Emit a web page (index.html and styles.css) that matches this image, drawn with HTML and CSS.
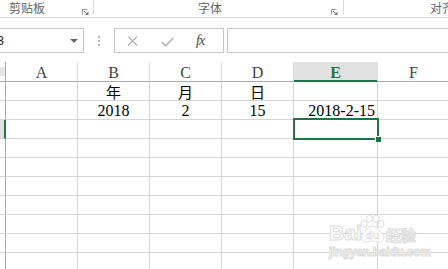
FILE: index.html
```html
<!DOCTYPE html>
<html lang="zh-CN">
<head>
  <meta charset="UTF-8" />
  <meta name="viewport" content="width=device-width, initial-scale=1.0"/>
  <title>Excel - 日期</title>
  <link rel="stylesheet" href="styles.css">
</head>

<body>
  <div class="ribbon">
    <div class="group group-clip">
      <span class="group-label">剪贴板</span>
      <svg class="launcher" width="7" height="6" viewBox="0 0 7 6">
        <path d="M0.5 5.5V0.5H5.5" fill="none" stroke="#9a9a9a" stroke-width="1"/>
        <path d="M2 2L5 5" stroke="#7a7a7a" stroke-width="1"/>
        <path d="M6.5 2.5V6.5H2.5Z" fill="#7a7a7a"/>
      </svg>
    </div>
    <div class="group group-font">
      <span class="group-label">字体</span>
      <svg class="launcher" width="7" height="6" viewBox="0 0 7 6">
        <path d="M0.5 5.5V0.5H5.5" fill="none" stroke="#9a9a9a" stroke-width="1"/>
        <path d="M2 2L5 5" stroke="#7a7a7a" stroke-width="1"/>
        <path d="M6.5 2.5V6.5H2.5Z" fill="#7a7a7a"/>
      </svg>
    </div>
    <div class="group group-align">
      <span class="group-label">对齐方式</span>
    </div>
  </div>

  <div class="formula-bar">
    <div class="name-box">
      <span class="name">E3</span>
      <svg class="caret" width="8" height="4" viewBox="0 0 8 4"><path d="M0 0H8L4 4Z" fill="#6a6a6a"/></svg>
    </div>
    <div class="grip"><i></i><i></i><i></i></div>
    <div class="fx-buttons">
      <svg class="btn-cancel" width="11" height="10" viewBox="0 0 11 10">
        <path d="M1 0.5L10 9.5M10 0.5L1 9.5" stroke="#b4b4b4" stroke-width="1.2"/>
      </svg>
      <svg class="btn-enter" width="13" height="10" viewBox="0 0 13 10">
        <path d="M0.8 5.2L4.6 8.8L12.4 0.8" fill="none" stroke="#b9b9b9" stroke-width="1.8"/>
      </svg>
      <span class="btn-fx">fx</span>
    </div>
    <div class="formula-input"></div>
  </div>

  <div class="sheet">
    <div class="corner"></div>
    <div class="col-head">A</div>
    <div class="col-head">B</div>
    <div class="col-head">C</div>
    <div class="col-head">D</div>
    <div class="col-head active">E</div>
    <div class="col-head">F</div>

    <div class="row-head"></div>
    <div class="cell"></div>
    <div class="cell cjk">年</div>
    <div class="cell cjk">月</div>
    <div class="cell cjk">日</div>
    <div class="cell"></div>
    <div class="cell"></div>

    <div class="row-head"></div>
    <div class="cell"></div>
    <div class="cell">2018</div>
    <div class="cell">2</div>
    <div class="cell">15</div>
    <div class="cell date">2018-2-15</div>
    <div class="cell"></div>

    <div class="row-head active"></div>
    <div class="cell"></div>
    <div class="cell"></div>
    <div class="cell"></div>
    <div class="cell"></div>
    <div class="cell selected"><div class="selection"><span class="fill-handle"></span></div></div>
    <div class="cell"></div>

    <div class="row-head"></div><div class="cell"></div><div class="cell"></div><div class="cell"></div><div class="cell"></div><div class="cell"></div><div class="cell"></div>
    <div class="row-head"></div><div class="cell"></div><div class="cell"></div><div class="cell"></div><div class="cell"></div><div class="cell"></div><div class="cell"></div>
    <div class="row-head"></div><div class="cell"></div><div class="cell"></div><div class="cell"></div><div class="cell"></div><div class="cell"></div><div class="cell"></div>
    <div class="row-head"></div><div class="cell"></div><div class="cell"></div><div class="cell"></div><div class="cell"></div><div class="cell"></div><div class="cell"></div>
    <div class="row-head"></div><div class="cell"></div><div class="cell"></div><div class="cell"></div><div class="cell"></div><div class="cell"></div><div class="cell"></div>
    <div class="row-head"></div><div class="cell"></div><div class="cell"></div><div class="cell"></div><div class="cell"></div><div class="cell"></div><div class="cell"></div>
    <div class="row-head"></div><div class="cell"></div><div class="cell"></div><div class="cell"></div><div class="cell"></div><div class="cell"></div><div class="cell"></div>
  </div>

  <div class="watermark">
    <div class="wm-logo">
      <span class="wm-bai">Bai</span>
      <svg class="wm-paw" width="27" height="28" viewBox="0 0 27 28">
        <g fill="#fff" stroke="#dedede" stroke-width="1">
          <ellipse cx="5" cy="9" rx="3" ry="3.6"/>
          <ellipse cx="10.5" cy="3.8" rx="3" ry="3.4"/>
          <ellipse cx="17" cy="3.8" rx="3" ry="3.4"/>
          <ellipse cx="22" cy="9" rx="3" ry="3.6"/>
          <path d="M13.5 11C9 11 7 16 3.5 19C0.5 22 2.5 27 7 27C10 27 11.5 26 13.5 26C15.5 26 17 27 20 27C24.5 27 26.5 22 23.5 19C20 16 18 11 13.5 11Z"/>
        </g>
      </svg>
      <span class="wm-du">du</span>
      <span class="wm-jy">经验</span>
    </div>
    <div class="wm-url">jingyan.baidu.com</div>
  </div>
</body>
</html>
```

FILE: styles.css
```css
body {
  margin: 0;
  width: 448px;
  height: 269px;
  overflow: hidden;
  position: relative;
  background: #fff;
  font-family: "Liberation Serif", serif;
  color: #000;
}

/* ribbon group labels */
.ribbon {
  display: flex;
  height: 17px;
  border-bottom: 1px solid #d6d6d6;
  overflow: hidden;
}

.group {
  display: flex;
  flex-shrink: 0;
  align-items: flex-start;
  height: 14px;
  border-right: 1px solid #dadada;
  box-sizing: border-box;
}

.group-label {
  font-family: "Noto Sans CJK SC", "Noto Sans", sans-serif;
  font-size: 12px;
  line-height: 15px;
  color: #666;
  white-space: nowrap;
}

.launcher {
  margin-top: 9px;
  margin-left: auto;
}

.group-clip {
  width: 94px;
  padding-left: 9px;
  padding-right: 4px;
}

.group-font {
  width: 250px;
  padding-left: 104px;
  padding-right: 5px;
}

.group-align {
  width: 200px;
  padding-left: 86px;
  border-right: none;
}

/* formula bar */
.formula-bar {
  display: flex;
  align-items: center;
  height: 25px;
  margin-top: 10px;
}

.name-box {
  display: flex;
  align-items: center;
  flex-shrink: 0;
  width: 100px;
  height: 25px;
  margin-left: -16px;
  padding-left: 3px;
  box-sizing: border-box;
  border: 1px solid #c6c6c6;
}

.name {
  font-family: "Liberation Sans", sans-serif;
  font-size: 13px;
  color: #222;
}

.caret {
  margin-left: auto;
  margin-right: 5px;
  margin-top: 1px;
}

.grip {
  display: flex;
  flex-direction: column;
  gap: 2px;
  margin-left: 14px;
  margin-top: 1px;
}

.grip i {
  display: block;
  width: 2px;
  height: 2px;
  background: #b5b5b5;
}

.fx-buttons {
  display: flex;
  align-items: center;
  flex-shrink: 0;
  width: 110px;
  height: 25px;
  margin-left: 14px;
  box-sizing: border-box;
  border: 1px solid #c6c6c6;
}

.btn-cancel {
  margin-left: 12px;
  margin-top: 1px;
}

.btn-enter {
  margin-left: 23px;
  margin-top: 2px;
}

.btn-fx {
  margin-left: 22px;
  font-family: "Liberation Serif", serif;
  font-style: italic;
  font-size: 14px;
  color: #444;
  letter-spacing: -1px;
}

.formula-input {
  flex: 1;
  height: 25px;
  margin-left: 3px;
  margin-right: -10px;
  box-sizing: border-box;
  border: 1px solid #c6c6c6;
}

/* worksheet grid */
.sheet {
  display: grid;
  grid-template-columns: 6px 72px 72px 72px 72px 84px 72px;
  grid-template-rows: 20px;
  grid-auto-rows: 19px;
  margin-top: 9px;
}

.sheet > div {
  box-sizing: border-box;
  border-right: 1px solid #d4d4d4;
  border-bottom: 1px solid #d4d4d4;
}

.corner {
  background: linear-gradient(#fff 5px, #e4e4e4 5px, #e4e4e4 14px, #fff 14px);
}

.sheet > .corner,
.sheet > .row-head {
  border-right-color: #a8a8a8;
}

.sheet > .corner,
.sheet > .col-head {
  border-bottom-color: #ababab;
}

.col-head {
  display: flex;
  align-items: flex-end;
  justify-content: center;
  font-size: 16px;
  line-height: 16px;
  color: #444;
}

.sheet > .col-head {
  border-right-color: #dedede;
}

.col-head.active {
  background: #e1e1e1;
  color: #217346;
  font-weight: bold;
  box-shadow: inset 0 -1px 0 #217346;
}

.sheet > .col-head.active {
  border-bottom-color: #217346;
}

.row-head.active {
  background: #e1e1e1;
}

.sheet > .row-head.active {
  border-right: 2px solid #217346;
}

.cell {
  display: flex;
  align-items: flex-end;
  justify-content: center;
  font-size: 16px;
  line-height: 16px;
  white-space: nowrap;
}

.cell.cjk {
  font-family: "Noto Sans CJK SC", sans-serif;
  font-size: 15px;
}

.cell.date {
  justify-content: flex-end;
  padding-right: 2px;
}

.selected {
  position: relative;
}

.selection {
  position: absolute;
  left: -1px;
  top: -2px;
  width: 86px;
  height: 22px;
  box-sizing: border-box;
  border: 2px solid #217346;
}

.fill-handle {
  position: absolute;
  right: -4px;
  bottom: -4px;
  width: 5px;
  height: 5px;
  background: #217346;
  border-left: 1px solid #fff;
  border-top: 1px solid #fff;
}

/* baidu watermark */
.watermark {
  position: absolute;
  left: 329px;
  top: 214px;
  color: #fff;
  -webkit-text-stroke: 1px #dcdcdc;
}

.wm-logo {
  display: flex;
  align-items: flex-end;
  height: 29px;
  position: relative;
}

.wm-bai {
  font-family: "Liberation Sans", sans-serif;
  font-weight: bold;
  font-size: 21px;
  line-height: 21px;
}

.wm-paw {
  margin-left: -3px;
}

.wm-du {
  position: absolute;
  left: 37px;
  bottom: 2px;
  font-family: "Liberation Sans", sans-serif;
  font-weight: bold;
  font-size: 11px;
  line-height: 11px;
  -webkit-text-stroke: 0.6px #d8d8d8;
}

.wm-jy {
  font-family: "Noto Sans CJK SC", sans-serif;
  font-weight: bold;
  font-size: 15px;
  line-height: 17px;
}

.wm-url {
  font-family: "Liberation Sans", sans-serif;
  font-weight: bold;
  font-size: 12px;
  line-height: 14px;
  margin-top: 2px;
  letter-spacing: -0.2px;
}
```
